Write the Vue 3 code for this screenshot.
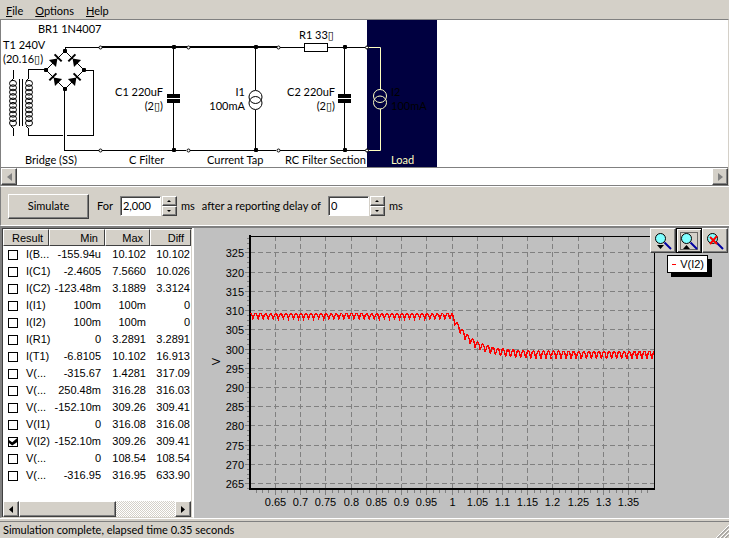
<template>
  <div class="window">
    <nav class="menu">
      <button v-for="item in menu" :key="item" class="menu-item"><u>{{ item[0] }}</u>{{ item.slice(1) }}</button>
    </nav>

    <section class="schematic">
      <svg class="circuit" width="727" height="147" viewBox="1 20 727 147">
        <rect class="selected" x="367" y="20" width="70" height="147" />

        <!-- transformer -->
        <g class="wire">
          <path d="M13.5 70V78L11.5 81M11.5 126L13.5 129V136M19.5 79V126M22.5 79V126" />
          <path d="M45 69.5H28.5V78L26.5 81M26.5 126L28.5 129V135.5H63M67 135.5H93.5V70.5H83" />
        </g>
        <g class="coil">
          <ellipse v-for="n in 10" :key="'p' + n" cx="13" :cy="79 + n * 4.4" rx="3.5" ry="3" />
          <ellipse v-for="n in 10" :key="'s' + n" cx="29" :cy="79 + n * 4.4" rx="3.5" ry="3" />
        </g>

        <!-- bridge -->
        <path class="thin" d="M65 51L46 70L65 89L84 70Z" />
        <g v-for="d in diodes" :key="d.x + '-' + d.y" :transform="`translate(${d.x} ${d.y}) rotate(${d.angle})`">
          <path d="M-5 -5L2 0L-5 5Z" />
          <path class="bar" d="M3 -5V5" />
        </g>
        <g class="wire">
          <path d="M65 51V47.5H99M64.5 89V150.5H99" />
          <path d="M102 150.5H186M190 150.5H276M280 150.5H365" />
          <path d="M280 47.5H304M328 47.5H365" />
          <path d="M173.5 47V94M173.5 102V150M344.5 47V94M344.5 102V150" />
          <path d="M255.5 47V90M255.5 110V150" />
          <rect x="304.5" y="43.5" width="23" height="8" />
        </g>
        <path class="thick" d="M102 47H187M190 47H277" />
        <g class="source">
          <circle cx="255.5" cy="97" r="6.5" />
          <circle cx="255.5" cy="103" r="6.5" />
        </g>
        <g>
          <path d="M167 94h13v4h-13zM167 99h13v4h-13z" />
          <path d="M338 94h13v4h-13zM338 99h13v4h-13z" />
        </g>
        <g class="load">
          <path d="M368 47.5H380.5V90M380.5 109V150.5H368" />
          <circle cx="380" cy="96" r="6.5" />
          <circle cx="380" cy="102.5" r="6.5" />
        </g>
        <rect v-for="n in nodes" :key="'n' + n" :x="n[0] - 2" :y="n[1] - 2" width="4" height="4" rx="1" />
        <circle v-for="t in terminals" :key="'t' + t" class="terminal" :cx="t[0]" :cy="t[1]" r="1.5" />

        <text x="38" y="33">BR1 1N4007</text>
        <text x="3" y="49">T1 240V</text>
        <text x="3" y="63">(20.16<tspan class="box">▯</tspan>)</text>
        <text x="163" y="96" text-anchor="end">C1 220uF</text>
        <text x="163" y="110" text-anchor="end">(2<tspan class="box">▯</tspan>)</text>
        <text x="245" y="96" text-anchor="end">I1</text>
        <text x="245" y="110" text-anchor="end">100mA</text>
        <text x="299" y="39">R1 33<tspan class="box">▯</tspan></text>
        <text x="335" y="96" text-anchor="end">C2 220uF</text>
        <text x="335" y="110" text-anchor="end">(2<tspan class="box">▯</tspan>)</text>
        <text x="391" y="96">I2</text>
        <text x="391" y="110">100mA</text>
        <text x="25" y="164">Bridge (SS)</text>
        <text x="129" y="164">C Filter</text>
        <text x="207" y="164">Current Tap</text>
        <text x="285" y="164">RC Filter Section</text>
        <text class="light" x="391" y="164">Load</text>
      </svg>
      <div class="scrollbar plain">
        <button class="arrow disabled" aria-label="Scroll left"><svg width="5" height="8"><path d="M5 0V8L0 4Z" /></svg></button>
        <button class="arrow disabled" aria-label="Scroll right"><svg width="5" height="8"><path d="M0 0V8L5 4Z" /></svg></button>
      </div>
    </section>

    <form class="toolbar" @submit.prevent>
      <button class="simulate">Simulate</button>
      <label for="duration">For</label>
      <div class="spin-box">
        <input id="duration" v-model="duration" type="text" />
        <div class="spin">
          <button type="button" aria-label="Increase"><i class="up"></i></button>
          <button type="button" aria-label="Decrease"><i class="down"></i></button>
        </div>
      </div>
      <span class="unit">ms</span>
      <label for="delay">after a reporting delay of</label>
      <div class="spin-box">
        <input id="delay" v-model="delay" type="text" />
        <div class="spin">
          <button type="button" aria-label="Increase"><i class="up"></i></button>
          <button type="button" aria-label="Decrease"><i class="down"></i></button>
        </div>
      </div>
      <span class="unit">ms</span>
    </form>

    <main class="results">
      <div class="list">
        <table>
          <colgroup>
            <col class="col-result" />
            <col class="col-min" />
            <col class="col-max" />
            <col />
          </colgroup>
          <thead>
            <tr><th>Result</th><th>Min</th><th>Max</th><th>Diff</th></tr>
          </thead>
          <tbody>
            <tr v-for="(row, i) in rows" :key="i">
              <td>
                <label><input v-model="row.on" type="checkbox" />{{ row.name }}</label>
              </td>
              <td>{{ row.min }}</td>
              <td>{{ row.max }}</td>
              <td>{{ row.diff }}</td>
            </tr>
          </tbody>
        </table>
        <div class="scrollbar">
          <button class="arrow" aria-label="Scroll left"><svg width="4" height="7"><path d="M4 0V7L0 3.5Z" /></svg></button>
          <div class="thumb"></div>
          <button class="arrow end" aria-label="Scroll right"><svg width="4" height="7"><path d="M0 0V7L4 3.5Z" /></svg></button>
        </div>
      </div>

      <div ref="chart" class="chart">
        <svg class="plot" :width="size.w" :height="size.h">
          <g class="grid">
            <path v-for="v in yTicks" :key="'y' + v" :d="`M${left} ${py(v)}H${right}`" />
            <path v-for="t in xTicks" :key="'x' + t" :d="`M${px(t)} ${top}V${bottom}`" />
          </g>
          <path class="ticks" :d="tickPath" />
          <path class="frame" :d="`M${left} ${top + 0.5}H${right + 0.5}V${bottom}`" />
          <path class="axis" :d="`M${left - 1} ${bottom}H${right + 1}`" />
          <path class="axis" :d="`M${left} ${top - 1}V${bottom + 1}`" />
          <polyline class="trace" :points="trace" />
          <text v-for="v in yTicks" :key="'yl' + v" :x="left - 6" :y="py(v) + 4" text-anchor="end">{{ v }}</text>
          <text v-for="t in xTicks" :key="'xl' + t" :x="px(t)" :y="bottom + 17" text-anchor="middle">{{ t }}</text>
          <text text-anchor="middle" :transform="`translate(26 ${(top + bottom) / 2 - 1}) rotate(-90)`">V</text>
        </svg>
        <div class="zoom-tools">
          <button v-for="z in ['out', 'in', 'reset']" :key="z" :class="{ focused: z === 'in' }" :aria-label="'Zoom ' + z">
            <svg width="20" height="20" viewBox="0 0 20 20">
              <rect v-if="z === 'in'" class="dots" x="1.5" y="1.5" width="17" height="17" />
              <circle class="lens" cx="7.5" cy="7.5" r="5" />
              <path class="handle" d="M11.5 11.5L18 18" />
              <path v-if="z === 'out'" d="M4 14H11L7.5 18Z" />
              <path v-if="z === 'in'" d="M4 18H11L7.5 14Z" />
              <path v-if="z === 'reset'" class="cross" d="M5 6L12 13M12 5L5 13" />
            </svg>
          </button>
        </div>
        <div class="legend"><span class="key"></span>V(I2)</div>
      </div>
    </main>

    <footer class="status">
      <span>Simulation complete, elapsed time 0.35 seconds</span>
      <svg class="grip" width="13" height="13">
        <path class="grip-light" d="M0 13L13 0M4 13L13 4M8 13L13 8" />
        <path class="grip-dark" d="M1.5 13L13 1.5M5.5 13L13 5.5M9.5 13L13 9.5" />
      </svg>
    </footer>
  </div>
</template>

<script setup>
import { ref, computed, onMounted, onBeforeUnmount } from "vue";

const menu = ["File", "Options", "Help"];
const duration = ref("2,000");
const delay = ref("0");

const rows = ref([
  { name: "I(B...", min: "-155.94u", max: "10.102", diff: "10.102" },
  { name: "I(C1)", min: "-2.4605", max: "7.5660", diff: "10.026" },
  { name: "I(C2)", min: "-123.48m", max: "3.1889", diff: "3.3124" },
  { name: "I(I1)", min: "100m", max: "100m", diff: "0" },
  { name: "I(I2)", min: "100m", max: "100m", diff: "0" },
  { name: "I(R1)", min: "0", max: "3.2891", diff: "3.2891" },
  { name: "I(T1)", min: "-6.8105", max: "10.102", diff: "16.913" },
  { name: "V(...", min: "-315.67", max: "1.4281", diff: "317.09" },
  { name: "V(...", min: "250.48m", max: "316.28", diff: "316.03" },
  { name: "V(...", min: "-152.10m", max: "309.26", diff: "309.41" },
  { name: "V(I1)", min: "0", max: "316.08", diff: "316.08" },
  { name: "V(I2)", min: "-152.10m", max: "309.26", diff: "309.41", on: true },
  { name: "V(...", min: "0", max: "108.54", diff: "108.54" },
  { name: "V(...", min: "-316.95", max: "316.95", diff: "633.90" },
]);

const diodes = [
  { x: 56, y: 60, angle: -45 },
  { x: 74, y: 60, angle: -135 },
  { x: 55, y: 79, angle: -135 },
  { x: 75, y: 79, angle: -45 },
];
const nodes = [
  [65, 51], [46, 70], [84, 70], [65, 89],
  [174, 47], [174, 150], [256, 47], [256, 150], [345, 47], [345, 150],
];
const terminals = [
  [100.5, 47.5], [100.5, 150.5], [188.5, 47.5], [188.5, 150.5],
  [278.5, 47.5], [278.5, 150.5], [367, 47.5], [367, 150.5],
];

// chart
const chart = ref(null);
const size = ref({ w: 535, h: 290 });
const measure = () => {
  size.value = { w: chart.value.clientWidth, h: chart.value.clientHeight };
};
onMounted(() => {
  measure();
  window.addEventListener("resize", measure);
});
onBeforeUnmount(() => window.removeEventListener("resize", measure));

const left = 56;
const top = 8;
const right = computed(() => size.value.w - 75);
const bottom = computed(() => size.value.h - 29);
const scaleX = (t) => left + ((t - 0.6) * (right.value - left)) / 0.8;
const scaleY = (v) => top + ((329.4 - v) * (bottom.value - top)) / 65.8;
const px = (t) => Math.floor(scaleX(t)) + 0.5;
const py = (v) => Math.floor(scaleY(v)) + 0.5;

const yTicks = Array.from({ length: 13 }, (_, i) => 325 - i * 5);
const xTicks = Array.from({ length: 15 }, (_, i) => Math.round(65 + i * 5) / 100);

const tickPath = computed(() => {
  let d = "";
  for (let i = 0; i <= 52; i++) {
    const v = 328.75 - i * 1.25;
    d += `M${left - (v % 5 ? 3 : 5)} ${py(v)}H${left}`;
  }
  for (let i = 1; i < 64; i++) {
    d += `M${px(0.6 + i * 0.0125)} ${bottom.value}v${i % 4 ? 4 : 6}`;
  }
  return d;
});

// 100 Hz ripple, dropping when the load is switched on at 1 s
const trace = computed(() => {
  const points = [];
  for (let t = 0.6; t < 1.4; t += 0.0005) {
    const after = Math.max(0, t - 1);
    const drop = 1 - Math.exp(-after / 0.037);
    const peak = 309.2 - 9.8 * drop;
    const ripple = 1.3 + 0.7 * drop;
    const v = peak - ripple * (1 - Math.abs(Math.sin(Math.PI * 100 * (t + 0.004))));
    points.push(scaleX(t).toFixed(1) + "," + scaleY(v).toFixed(1));
  }
  return points.join(" ");
});
</script>

<style>
body {
  background: #d4d0c8;
}
</style>

<style scoped>
.window {
  display: flex;
  flex-direction: column;
  min-height: 100vh;
  background: #d4d0c8;
  color: #000;
  font: 11px/14px Lato, Tahoma, sans-serif;
}
button,
input {
  font: inherit;
  color: inherit;
  margin: 0;
  padding: 0;
  border-radius: 0;
  box-sizing: border-box;
}
svg {
  display: block;
}

.menu {
  display: flex;
  gap: 12px;
  height: 19px;
  padding-left: 6px;
}
.menu-item {
  border: 0;
  background: none;
  padding-top: 2px;
}

/* schematic */
.schematic {
  border: 1px solid #808080;
  border-right-color: #d4d0c8;
  background: #fff;
  overflow: hidden;
}
.box {
  font-family: "DejaVu Sans", sans-serif;
}
.selected {
  fill: #000040;
}
.wire {
  fill: none;
  stroke: #000;
  shape-rendering: crispEdges;
}
.coil,
.source {
  fill: none;
  stroke: #000;
}
.thin {
  fill: none;
  stroke: #000;
}
.thick {
  stroke: #000;
  stroke-width: 2;
}
.bar {
  stroke: #000;
  stroke-width: 2;
}
.load {
  fill: none;
  stroke: #ffffc0;
}
.terminal {
  fill: #fff;
  stroke: #000;
}
.light {
  fill: #ffffc0;
}

.scrollbar {
  display: flex;
  height: 16px;
  background: repeating-conic-gradient(#fff 0 25%, #d4d0c8 0 50%) 0 0 / 2px 2px;
}
.scrollbar.plain {
  border-top: 1px solid #808080;
  height: 17px;
  justify-content: space-between;
  background: #fff;
}
.arrow,
.thumb,
.simulate,
.spin button,
.zoom-tools button {
  background: #d4d0c8;
  border: 1px solid;
  border-color: #fff #404040 #404040 #fff;
  box-shadow: inset -1px -1px #808080;
}
.arrow {
  width: 16px;
  display: flex;
  align-items: center;
  justify-content: center;
}
.arrow.disabled {
  fill: #808080;
}
.thumb {
  width: 97px;
  box-sizing: border-box;
}
.arrow.end {
  margin-left: auto;
}

/* toolbar */
.toolbar {
  display: flex;
  align-items: center;
  height: 38px;
  padding-left: 7px;
  border: 1px solid #fff;
  border-left-color: #808080;
  border-right: 0;
}
.simulate {
  width: 81px;
  height: 25px;
  margin-right: 8px;
}
.spin-box {
  display: flex;
  gap: 1px;
  margin: 0 4px 0 7px;
}
.spin-box input {
  width: 41px;
  height: 20px;
  padding: 0 2px 2px;
  border: 1px solid;
  border-color: #808080 #fff #fff #808080;
  box-shadow: inset 1px 1px #404040;
  background: #fff;
}
.spin {
  display: flex;
  flex-direction: column;
}
.spin button {
  display: flex;
  align-items: center;
  justify-content: center;
  width: 15px;
  height: 10px;
}
.up,
.down {
  border: 2px solid transparent;
}
.up {
  border-top: 0;
  border-bottom-color: #000;
}
.down {
  border-bottom: 0;
  border-top-color: #000;
}
.unit {
  margin-right: 7px;
}

/* results */
.results {
  flex: 1;
  display: flex;
  border-top: 2px solid #808080;
  border-bottom: 1px solid #fff;
  font-family: "Liberation Sans", Arial, sans-serif;
}
.list {
  display: flex;
  flex-direction: column;
  justify-content: space-between;
  width: 194px;
  box-sizing: border-box;
  border-left: 2px solid #808080;
  border-right: 2px solid #fff;
  border-bottom: 1px solid #d4d0c8;
  box-shadow: inset 1px 1px #404040, inset -1px 0 #d4d0c8;
  padding: 1px 1px 0;
  background: #fff;
}
table {
  width: 100%;
  table-layout: fixed;
  border-spacing: 0;
}
.col-result {
  width: 46px;
}
.col-min {
  width: 56px;
}
.col-max {
  width: 45px;
}
th {
  height: 17px;
  box-sizing: border-box;
  padding: 0 6px 0 8px;
  border: 1px solid;
  border-color: #fff #404040 #404040 #fff;
  background: #d4d0c8;
  font-weight: normal;
  text-align: right;
}
th:first-child {
  padding-right: 0;
  text-align: left;
}
td {
  height: 17px;
  padding: 0 4px 0 0;
  line-height: 17px;
  text-align: right;
  white-space: nowrap;
}
td:first-child {
  padding-right: 0;
}
td:last-child {
  padding-right: 1px;
}
td label {
  display: flex;
  align-items: center;
  gap: 8px;
  padding-left: 5px;
}
td input {
  appearance: none;
  flex: none;
  width: 10px;
  height: 10px;
  border: 1px solid #000;
  background: #fff;
}
td input:checked::after {
  content: "";
  display: block;
  width: 8px;
  height: 8px;
  background: #000;
  clip-path: polygon(0 30%, 40% 60%, 100% 10%, 100% 60%, 40% 100%, 0 70%);
}

/* chart */
.chart {
  position: relative;
  flex: 1;
  min-width: 0;
  background: #c0c0c0;
}
.plot {
  position: absolute;
}
.plot path,
.trace {
  fill: none;
  shape-rendering: crispEdges;
}
.grid {
  stroke: #808080;
  stroke-dasharray: 5 3;
}
.ticks {
  stroke: #808080;
}
.frame {
  stroke: #000;
}
.axis {
  stroke: #000;
  stroke-width: 2;
}
.trace {
  stroke: #f00;
  stroke-width: 1.4;
}
.zoom-tools {
  position: absolute;
  top: 0;
  right: 1px;
  display: flex;
}
.zoom-tools button {
  width: 26px;
  height: 25px;
  padding: 1px 2px;
}
.zoom-tools .focused {
  border-color: #000;
  box-shadow: inset 1px 1px #fff, inset -1px -1px #404040;
}
.lens {
  fill: #80ffff;
  stroke: #000;
}
.handle {
  stroke: #0000a0;
  stroke-width: 2;
}
.cross {
  stroke: #f00;
  stroke-width: 2;
}
.dots {
  fill: none;
  stroke: #000;
  stroke-dasharray: 1 1;
}
.legend {
  position: absolute;
  top: 27px;
  right: 21px;
  display: flex;
  align-items: center;
  gap: 4px;
  padding: 1px 3px 1px 4px;
  border: 1px solid #000;
  background: #fff;
  box-shadow: 4px 4px #000;
}
.key {
  width: 4px;
  height: 1px;
  background: #f00;
}

/* status bar */
.status {
  display: flex;
  justify-content: space-between;
  align-items: flex-end;
  height: 16px;
  margin-top: 2px;
  padding: 0 0 0 3px;
  border-top: 1px solid #808080;
}
.status span {
  padding-bottom: 1px;
}
.grip-light {
  stroke: #fff;
}
.grip-dark {
  stroke: #808080;
}
</style>
